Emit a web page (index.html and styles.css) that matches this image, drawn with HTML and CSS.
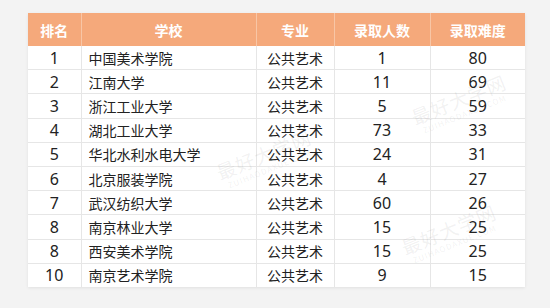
FILE: index.html
```html
<!DOCTYPE html>
<html lang="zh">
<head>
<meta charset="utf-8">
<link rel="stylesheet" href="styles.css">
</head>
<body>
<div class="wrap">
  <table class="rank">
    <colgroup>
      <col class="c1"><col class="c2"><col class="c3"><col class="c4"><col class="c5">
    </colgroup>
    <thead>
      <tr><th>排名</th><th>学校</th><th>专业</th><th>录取人数</th><th>录取难度</th></tr>
    </thead>
    <tbody>
      <tr><td class="num">1</td><td class="school">中国美术学院</td><td>公共艺术</td><td class="num">1</td><td class="num">80</td></tr>
      <tr><td class="num">2</td><td class="school">江南大学</td><td>公共艺术</td><td class="num">11</td><td class="num">69</td></tr>
      <tr><td class="num">3</td><td class="school">浙江工业大学</td><td>公共艺术</td><td class="num">5</td><td class="num">59</td></tr>
      <tr><td class="num">4</td><td class="school">湖北工业大学</td><td>公共艺术</td><td class="num">73</td><td class="num">33</td></tr>
      <tr><td class="num">5</td><td class="school">华北水利水电大学</td><td>公共艺术</td><td class="num">24</td><td class="num">31</td></tr>
      <tr><td class="num">6</td><td class="school">北京服装学院</td><td>公共艺术</td><td class="num">4</td><td class="num">27</td></tr>
      <tr><td class="num">7</td><td class="school">武汉纺织大学</td><td>公共艺术</td><td class="num">60</td><td class="num">26</td></tr>
      <tr><td class="num">8</td><td class="school">南京林业大学</td><td>公共艺术</td><td class="num">15</td><td class="num">25</td></tr>
      <tr><td class="num">8</td><td class="school">西安美术学院</td><td>公共艺术</td><td class="num">15</td><td class="num">25</td></tr>
      <tr><td class="num">10</td><td class="school">南京艺术学院</td><td>公共艺术</td><td class="num">9</td><td class="num">15</td></tr>
    </tbody>
  </table>
  <div class="wm wm1"><span class="wm-cn">最好大学网</span><span class="wm-en">ZUIHAODAXUE.COM</span></div>
  <div class="wm wm2"><span class="wm-cn">最好大学网</span><span class="wm-en">ZUIHAODAXUE.COM</span></div>
  <div class="wm wm3"><span class="wm-cn">最好大学网</span><span class="wm-en">ZUIHAODAXUE.COM</span></div>
</div>
</body>
</html>
```

FILE: styles.css
```css
html, body {
  margin: 0;
  padding: 0;
  background: #f3f3f3;
}
body {
  font-family: "Noto Sans CJK SC", "Noto Sans", sans-serif;
  color: #222;
}
.wrap {
  position: relative;
  padding: 13px 0 0 28px;
  width: 550px;
  height: 308px;
  box-sizing: border-box;
  overflow: hidden;
}
.rank {
  border-collapse: collapse;
  table-layout: fixed;
  width: 497px;
  background: #fff;
  box-shadow: 0 1px 3px rgba(0,0,0,0.08);
}
.c1 { width: 53px; }
.c2 { width: 175px; }
.c3 { width: 78px; }
.c4 { width: 96px; }
.c5 { width: 95px; }
.rank th {
  background: #f5a97b;
  color: #fff;
  font-weight: bold;
  font-size: 14px;
  height: 33px;
  padding: 0;
  border-right: 1px solid #f8c6a6;
  text-align: center;
}
.rank th:last-child { border-right: none; }
.rank td {
  height: 23.2px;
  padding: 0;
  font-size: 14px;
  line-height: 20px;
  border-top: 1px solid #e6e6e6;
  border-right: 1px solid #e6e6e6;
  text-align: center;
}
.rank tbody tr:first-child td { border-top: none; }
.rank td:last-child { border-right: none; }
.rank td.school {
  text-align: left;
  padding-left: 7px;
}
.rank td.num {
  font-family: "Noto Sans", "DejaVu Sans", sans-serif;
  font-size: 16px;
}
.wm {
  position: absolute;
  display: flex;
  flex-direction: column;
  align-items: center;
  color: rgba(120,120,120,0.10);
  transform: rotate(-22deg);
  pointer-events: none;
}
.wm-cn { font-size: 19px; letter-spacing: 1px; }
.wm-en { font-size: 8px; letter-spacing: 1px; margin-top: -3px; }
.wm1 { left: 410px; top: 85px; }
.wm2 { left: 215px; top: 140px; }
.wm3 { left: 400px; top: 215px; }
```
